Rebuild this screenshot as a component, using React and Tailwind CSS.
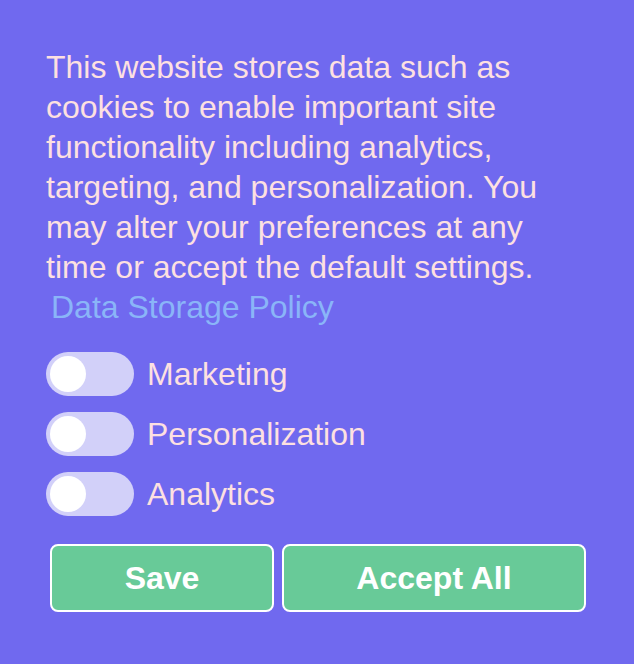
import { useState } from "react";

const prefs = ["Marketing", "Personalization", "Analytics"];

const Toggle = ({ on, onClick }) => (
  <button
    onClick={onClick}
    className={`relative w-[88px] h-[44px] rounded-full shrink-0 ${
      on ? "bg-[#68ca98]" : "bg-[#d2d0f9]"
    }`}
  >
    <span
      className={`absolute top-[4px] w-[36px] h-[36px] rounded-full bg-white ${
        on ? "left-[48px]" : "left-[4px]"
      }`}
    />
  </button>
);

const App = () => {
  const [checked, setChecked] = useState({});

  return (
    <div className="w-[634px] h-[664px] bg-[#7069ef] font-['Liberation_Sans',Arial,sans-serif] text-[#fde0e1] pt-[47px] px-[46px]">
      <p className="text-[32px] leading-[40px] w-[542px]">
        This website stores data such as cookies to enable important site
        functionality including analytics, targeting, and personalization. You
        may alter your preferences at any time or accept the default settings.{" "}
        <a href="#" className="text-[#8ab5f8] ml-[5px]">
          Data Storage Policy
        </a>
      </p>

      {/* Preference toggles */}
      <div className="mt-[25px] flex flex-col gap-[16px]">
        {prefs.map((name) => (
          <label key={name} className="flex items-center gap-[13px]">
            <Toggle
              on={!!checked[name]}
              onClick={() => setChecked({ ...checked, [name]: !checked[name] })}
            />
            <span className="text-[32px] leading-[40px]">{name}</span>
          </label>
        ))}
      </div>

      {/* Actions */}
      <div className="mt-[28px] ml-[4px] flex gap-[8px]">
        <button className="w-[224px] h-[68px] rounded-[8px] border-2 border-white bg-[#68ca98] text-white font-bold text-[32px]">
          Save
        </button>
        <button className="w-[304px] h-[68px] rounded-[8px] border-2 border-white bg-[#68ca98] text-white font-bold text-[32px]">
          Accept All
        </button>
      </div>
    </div>
  );
};

export default App;
